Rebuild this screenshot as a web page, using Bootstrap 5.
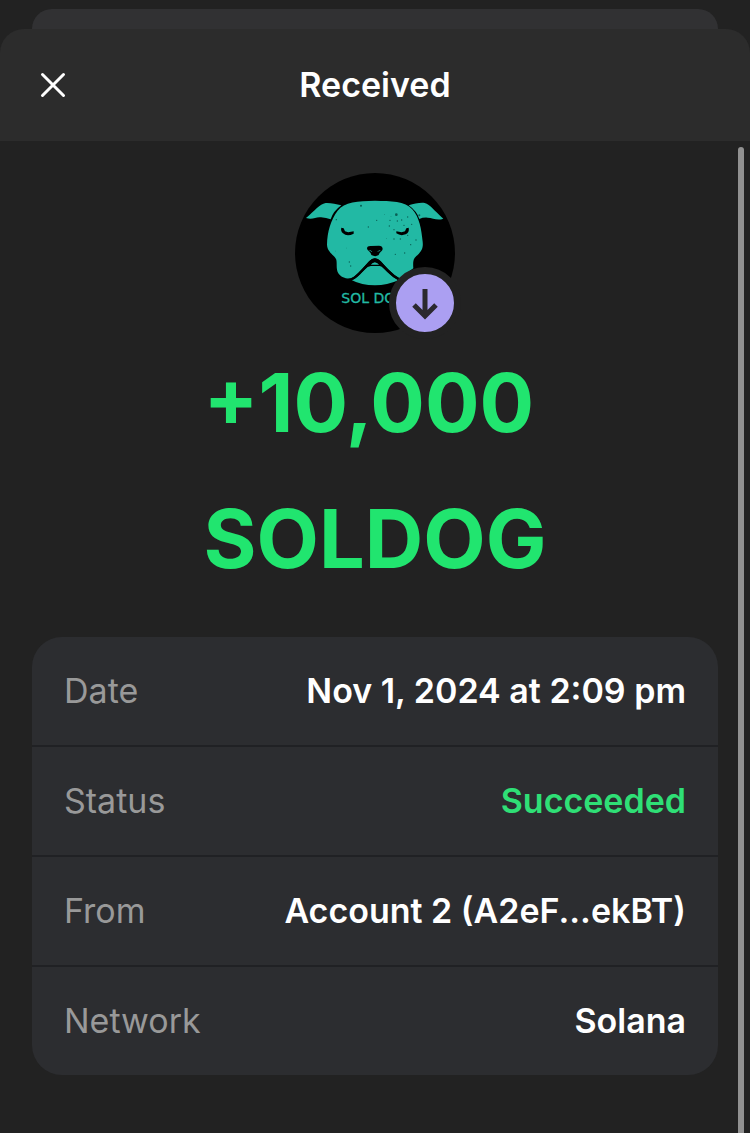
<!DOCTYPE html>
<html lang="en" data-bs-theme="dark">
<head>
<meta charset="utf-8">
<meta name="viewport" content="width=device-width, initial-scale=1">
<title>Received</title>
<link href="https://cdn.jsdelivr.net/npm/bootstrap@5.3.0/dist/css/bootstrap.min.css" rel="stylesheet">
<style>
  body { background: #222; color: #fff; font-family: Inter, "Liberation Sans", sans-serif; font-size: 34px; line-height: 44px; padding-top: 9px; }
  .gutter { padding-left: 32px; padding-right: 32px; }
  .back-sheet { height: 20px; background: #313133; border-radius: 20px 20px 0 0; }
  .sheet-head { display: grid; grid-template-columns: 42px 1fr 42px; height: 112px; background: #2c2c2c; border-radius: 24px 24px 0 0; }
  .sheet-head h1 { font-size: 34px; line-height: 44px; }
  .close-btn { width: 42px; height: 42px; }
  .hero { padding-top: 32px; }
  .avatar { width: 160px; height: 160px; }
  .direction { right: -6px; bottom: -6px; width: 72px; height: 72px; background: #ab9ff2; border: 7px solid #222; }
  .amount { font-size: 81px; line-height: 136px; padding-top: 2px; color: #21e56f; }
  .details { --bs-list-group-bg: #2c2d30; --bs-list-group-border-color: #202124; --bs-list-group-item-padding-x: 32px; --bs-list-group-item-padding-y: 32px; border-radius: 30px; margin: 30px 0 48px; }
  .details .list-group-item { border-width: 0 0 2px; color: #fff; }
  .details .list-group-item:last-child { border-bottom-width: 0; }
  .details dt { color: #999; }
  .details dd.succeeded { color: #2fdf76; }
  .scroll-thumb { top: 6px; right: 6px; bottom: 0; width: 6px; background: #919191; border-radius: 3px 3px 0 0; }
</style>
</head>
<body class="min-vh-100 d-flex flex-column">
<div class="gutter"><div class="back-sheet"></div></div>
<header class="sheet-head gutter align-items-center">
  <button type="button" class="close-btn btn p-0 border-0 text-white d-flex align-items-center justify-content-center" aria-label="Close">
    <svg width="26" height="26" viewBox="0 0 26 26" fill="none" stroke="currentColor" stroke-width="3" stroke-linecap="round"><path d="M2.500 2.500 23.500 23.500M23.500 2.500 2.500 23.500"/></svg>
  </button>
  <h1 class="fw-semibold text-center m-0">Received</h1>
</header>
<main class="position-relative flex-grow-1 gutter">
  <div class="hero">
    <div class="avatar position-relative mx-auto">
      <svg class="d-block" width="160" height="160" viewBox="30 24 480 480" role="img" aria-label="SOL DOG">
        <circle cx="270" cy="264" r="240" fill="#000"/>
        <g fill="#22b9a4">
          <path d="M169 121C153 118 137 113 122 114C103 118 91 136 63 159C84 166 93 154 108 157Q124 159 137 163Q144 139 169 121Z"/>
          <path d="M371 121C388 117 404 112 419 114C436 119 448 137 475 161C456 168 443 158 428 158Q414 157 403 162Q395 138 371 121Z"/>
          <path d="M270 107C219 108 178 110 158 137C137 165 127 200 126 239C127 262 149 271 154 284C157 300 151 317 165 331C179 344 198 341 207 335C225 320 240 302 253 288Q269 271 286 288C304 307 323 328 344 341L385 310C383 285 387 279 397 271C411 258 415 248 413 230C409 192 404 157 381 132C361 108 317 108 270 107Z"/>
          <path d="M201 346C219 337 232 319 248 306Q271 296 290 305C307 320 322 336 340 346Q307 361 270 361Q229 361 201 346Z"/>
        </g>
        <path d="M201 342Q215 335 231 317L255 291Q270 276 285 291L308 317Q324 334 343 343" fill="none" stroke="#000" stroke-width="7"/>
        <path d="M253 301Q269 278 287 301Z" fill="#22b9a4" stroke="#000" stroke-width="4"/>
        <path d="M246 250Q247 242 258 243L282 242Q292 242 293 251C293 258 284 260 281 270Q271 277 259 270C257 259 247 258 246 250Z" fill="#000"/>
        <path d="M253 257Q258 255 261 261M278 261Q281 255 286 257" fill="none" stroke="#22b9a4" stroke-width="2"/>
        <path d="M169 188L176 190L180 199L190 202L206 199L206 206Q186 216 174 205Q166 198 169 188ZM371 188L364 190L360 199L350 202L334 199L334 205Q347 214 362 208Q374 202 371 188Z" fill="#000"/>
        <g fill="#095f54">
          <circle cx="228" cy="122" r="3"/><circle cx="334" cy="149" r="4"/><circle cx="298" cy="149" r="1"/><circle cx="315" cy="166" r="2"/><circle cx="313" cy="183" r="2"/><circle cx="275" cy="166" r="2"/><circle cx="250" cy="186" r="2"/><circle cx="318" cy="154" r="1"/><circle cx="368" cy="156" r="2"/><circle cx="350" cy="165" r="2"/><circle cx="380" cy="178" r="2"/><circle cx="368" cy="211" r="2"/><circle cx="346" cy="222" r="2"/><circle cx="327" cy="222" r="2"/><circle cx="393" cy="225" r="2"/><circle cx="359" cy="264" r="2"/><circle cx="331" cy="268" r="2"/><circle cx="377" cy="239" r="2"/><circle cx="403" cy="151" r="3"/><circle cx="154" cy="164" r="2"/><circle cx="193" cy="291" r="2"/><circle cx="197" cy="303" r="2"/><circle cx="151" cy="258" r="1"/><circle cx="304" cy="221" r="1"/><circle cx="327" cy="194" r="2"/><circle cx="357" cy="181" r="2"/><circle cx="185" cy="249" r="1"/><circle cx="337" cy="168" r="2"/>
        </g>
        <text x="169" y="414" font-family="DejaVu Sans, sans-serif" font-size="42" fill="#22b9a4" stroke="#22b9a4" stroke-width="1">SOL DOG</text>
      </svg>
      <span class="direction position-absolute rounded-circle d-flex align-items-center justify-content-center">
        <svg width="58" height="58" viewBox="0 0 58 58" fill="none" stroke="#2b292f" stroke-width="5"><path d="M29 15V42M18 31 29 42 40 31"/></svg>
      </span>
    </div>
    <div class="text-center"><p class="amount d-inline-block align-top text-start fw-bold m-0">+10,000<br>SOLDOG</p></div>
    <dl class="details list-group">
      <div class="list-group-item d-flex justify-content-between"><dt class="fw-normal">Date</dt><dd class="fw-semibold m-0">Nov 1, 2024 at 2:09 pm</dd></div>
      <div class="list-group-item d-flex justify-content-between"><dt class="fw-normal">Status</dt><dd class="succeeded fw-semibold m-0">Succeeded</dd></div>
      <div class="list-group-item d-flex justify-content-between"><dt class="fw-normal">From</dt><dd class="fw-semibold m-0">Account 2 (A2eF...ekBT)</dd></div>
      <div class="list-group-item d-flex justify-content-between"><dt class="fw-normal">Network</dt><dd class="fw-semibold m-0">Solana</dd></div>
    </dl>
  </div>
  <div class="scroll-thumb position-absolute"></div>
</main>
<script src="https://cdn.jsdelivr.net/npm/bootstrap@5.3.0/dist/js/bootstrap.bundle.min.js"></script>
</body>
</html>
